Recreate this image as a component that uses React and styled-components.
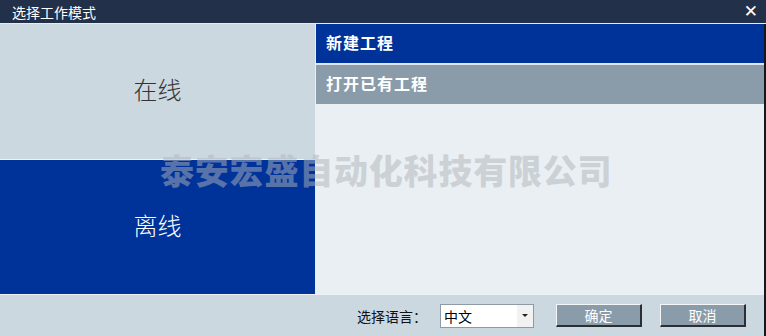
import React from "react";
import styled, { createGlobalStyle } from "styled-components";

const GlobalStyle = createGlobalStyle`
  html, body {
    margin: 0;
    padding: 0;
    background: #cbd8e0;
  }
  body {
    font-family: "Noto Sans CJK SC", "Noto Sans", sans-serif;
  }
`;

const Window = styled.div`
  width: 766px;
  height: 336px;
  display: flex;
  flex-direction: column;
  position: relative;
  overflow: hidden;
`;

const TitleBar = styled.div`
  height: 23px;
  background: #233049;
  border-bottom: 1px solid #e6edf2;
  display: flex;
  align-items: center;
  justify-content: space-between;
  padding: 0 8px 0 12px;
  color: #fff;
  font-size: 14px;
  flex-shrink: 0;
`;

const Close = styled.span`
  font-family: "DejaVu Sans", sans-serif;
  font-weight: bold;
  font-size: 17px;
  line-height: 1;
  cursor: pointer;
`;

const Frame = styled.div`
  flex: 1;
  display: flex;
  flex-direction: column;
  border-right: 2px solid #15171a;
`;

const Body = styled.div`
  height: 270px;
  display: flex;
  border-bottom: 1px solid #eef2f5;
`;

const ModeColumn = styled.div`
  width: 315px;
  display: flex;
  flex-direction: column;
  border-right: 1px solid #e8eef2;
`;

const ModeButton = styled.div`
  flex: 1;
  display: flex;
  align-items: center;
  justify-content: center;
  padding-bottom: 5px;
  font-family: "Noto Sans CJK SC", sans-serif;
  font-weight: 300;
  font-size: 24px;
  background: ${(p) => (p.$active ? "#003399" : "#cbd8e0")};
  color: ${(p) => (p.$active ? "#ffffff" : "#333333")};
  & + & {
    border-top: 1px solid #f2f5f8;
  }
`;

const ProjectColumn = styled.div`
  flex: 1;
  background: #eaeff3;
  display: flex;
  flex-direction: column;
`;

const ProjectItem = styled.div`
  height: 39px;
  display: flex;
  align-items: center;
  padding: 0 0 3px 10px;
  box-sizing: border-box;
  color: #fff;
  font-weight: bold;
  font-size: 16px;
  letter-spacing: 1px;
  background: ${(p) => (p.$active ? "#003399" : "#8a9ca9")};
  border-bottom: ${(p) => (p.$active ? "2px solid #dfe6ec" : "none")};
  height: ${(p) => (p.$active ? "41px" : "39px")};
`;

const Footer = styled.div`
  flex: 1;
  display: flex;
  align-items: center;
  justify-content: flex-end;
  padding-right: 18px;
  font-size: 14px;
  color: #111;
`;

const Label = styled.span`
  margin-right: 13px;
`;

const Select = styled.div`
  width: 92px;
  height: 22px;
  background: #fff;
  border: 1px solid #8e9aa4;
  display: flex;
  align-items: center;
  justify-content: space-between;
  margin-right: 22px;
  font-size: 14px;
  color: #000;
`;

const SelectText = styled.span`
  padding-left: 3px;
`;

const Arrow = styled.span`
  width: 16px;
  height: 100%;
  background: #f2f2f2;
  display: flex;
  align-items: center;
  justify-content: center;
  &::after {
    content: "";
    border-left: 3px solid transparent;
    border-right: 3px solid transparent;
    border-top: 3px solid #222;
  }
`;

const Button = styled.button`
  width: 86px;
  height: 23px;
  background: #8a9ca9;
  color: #fff;
  font-family: "Noto Sans CJK SC", sans-serif;
  font-size: 14px;
  padding: 0;
  border-style: solid;
  border-width: 1px 2px 2px 1px;
  border-color: #f4f6f8 #2a2f34 #2a2f34 #f4f6f8;
  & + & {
    margin-left: 18px;
  }
`;

const Watermark = styled.div`
  position: absolute;
  left: 160px;
  top: 145px;
  font-family: "Noto Sans CJK SC", sans-serif;
  font-weight: 900;
  font-size: 34px;
  letter-spacing: 0.8px;
  color: rgba(175, 180, 186, 0.5);
  pointer-events: none;
  white-space: nowrap;
`;

export default function App() {
  return (
    <>
      <GlobalStyle />
      <Window>
        <TitleBar>
          <span>选择工作模式</span>
          <Close>✕</Close>
        </TitleBar>
        <Frame>
          <Body>
            <ModeColumn>
              <ModeButton>在线</ModeButton>
              <ModeButton $active>离线</ModeButton>
            </ModeColumn>
            <ProjectColumn>
              <ProjectItem $active>新建工程</ProjectItem>
              <ProjectItem>打开已有工程</ProjectItem>
            </ProjectColumn>
          </Body>
          <Footer>
            <Label>选择语言：</Label>
            <Select>
              <SelectText>中文</SelectText>
              <Arrow />
            </Select>
            <Button>确定</Button>
            <Button>取消</Button>
          </Footer>
        </Frame>
        <Watermark>泰安宏盛自动化科技有限公司</Watermark>
      </Window>
    </>
  );
}
